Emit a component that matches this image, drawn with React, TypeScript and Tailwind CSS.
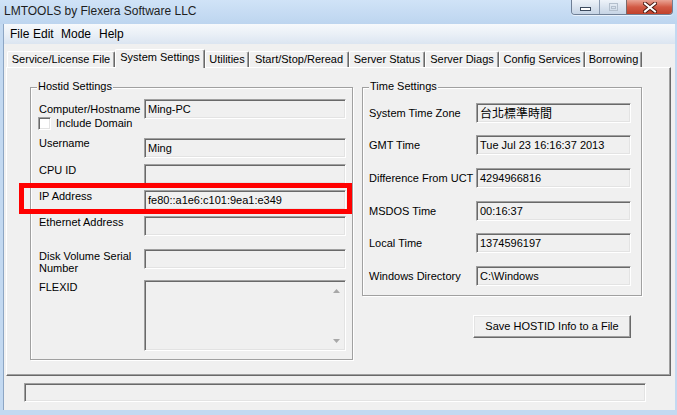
import React from "react"

const sunken =
  "border border-[#a0a0a0] border-r-white border-b-white bg-[#f0f0f0] shadow-[inset_1px_1px_0_#696969,inset_-1px_-1px_0_#e3e3e3]"

const tabs = [
  { label: "Service/License File", w: "w-[108px]" },
  { label: "System Settings", w: "w-[90px]", active: true },
  { label: "Utilities", w: "w-[44px]" },
  { label: "Start/Stop/Reread", w: "w-[100px]" },
  { label: "Server Status", w: "w-[76px]" },
  { label: "Server Diags", w: "w-[74px]" },
  { label: "Config Services", w: "w-[86px]" },
  { label: "Borrowing", w: "w-[57px]" },
]

const timeRows = [
  { label: "System Time Zone", value: "台北標準時間", mt: "mt-[15px]", cjk: true },
  { label: "GMT Time", value: "Tue Jul 23 16:16:37 2013", mt: "mt-[12px]" },
  { label: "Difference From UCT", value: "4294966816", mt: "mt-[13px]" },
  { label: "MSDOS Time", value: "00:16:37", mt: "mt-[13px]" },
  { label: "Local Time", value: "1374596197", mt: "mt-[12px]" },
  { label: "Windows Directory", value: "C:\\Windows", mt: "mt-[13px]" },
]

function TextBox({ className, children }: { className: string; children?: React.ReactNode }) {
  return (
    <div className={`${sunken} ${className} flex items-center pl-[3px] leading-[13px] whitespace-nowrap overflow-hidden`}>
      {children}
    </div>
  )
}

function GroupBox({ title, className, children }: { title: string; className: string; children: React.ReactNode }) {
  return (
    <div className={`relative border border-[#a0a0a0] shadow-[1px_1px_0_#fff,inset_1px_1px_0_#fff] ${className}`}>
      <span className="absolute left-[6px] top-[-8px] px-[1px] bg-[#f0f0f0] leading-[13px]">{title}</span>
      {children}
    </div>
  )
}

function HostRow({ label, value, mt, lmt = "" }: { label: string; value?: string; mt: string; lmt?: string }) {
  return (
    <div className={`flex items-start ${mt}`}>
      <span className={`w-[105px] leading-[13px] ${lmt}`}>{label}</span>
      <TextBox className="w-[202px] h-[20px]">{value}</TextBox>
    </div>
  )
}

function WindowButtons() {
  return (
    <div className="flex h-[15px] mr-[4px] rounded-b-[4px] overflow-hidden border border-t-0 border-[#6f7f95] shadow-[0_1px_0_#e8f1fb]">
      <div className="w-[28px] flex items-center justify-center bg-gradient-to-b from-[#eef3f9] to-[#c6d4e5] border-r border-[#8a9ab0]">
        <span className="w-[11px] h-[4px] bg-white border border-[#3c4a5e] mt-[3px]" />
      </div>
      <div className="w-[27px] flex items-center justify-center bg-gradient-to-b from-[#eef3f9] to-[#c6d4e5] border-r border-[#7a6a6a]">
        <span className="w-[9px] h-[8px] border border-[#b3bfcd] flex items-center justify-center">
          <span className="w-[5px] h-[3px] border border-[#b3bfcd]" />
        </span>
      </div>
      <div className="w-[45px] flex items-center justify-center bg-gradient-to-b from-[#e9a394] via-[#d25a45] to-[#c1412a]">
        <svg width="14" height="11" viewBox="0 0 14 11">
          <path d="M2 1.5 L12 9.5 M12 1.5 L2 9.5" stroke="#4a1a12" strokeWidth="4" strokeLinecap="square" />
          <path d="M2 1.5 L12 9.5 M12 1.5 L2 9.5" stroke="#ffffff" strokeWidth="2" strokeLinecap="square" />
        </svg>
      </div>
    </div>
  )
}

export default function App() {
  return (
    <div className="relative w-[677px] h-[415px] overflow-hidden bg-[#c3d9f1] font-['Liberation_Sans',Arial,sans-serif] text-[11px] text-black">
      <div className="h-[24px] flex items-start justify-between bg-gradient-to-b from-[#d0e3f7] to-[#bdd5ef]">
        <span className="pl-[4px] pt-[4px] text-[12px] leading-[15px] text-[#1e1e1e]">LMTOOLS by Flexera Software LLC</span>
        <WindowButtons />
      </div>

      <div className="ml-[3px] mr-[2px] h-[386px] bg-[#f0f0f0] flex flex-col border-l border-[#8da6c4]">
        <div className="h-[20px] flex items-center pl-[6px] text-[12px] bg-gradient-to-b from-[#f7f9fc] via-[#eaf0f7] to-[#dbe5f1]">
          <span className="w-[23px]">File</span>
          <span className="w-[28px]">Edit</span>
          <span className="w-[38px]">Mode</span>
          <span>Help</span>
        </div>

        <div className="h-[23px] flex items-end pl-[3px]">
          {tabs.map((t) =>
            t.active ? (
              <div
                key={t.label}
                className={`${t.w} relative z-10 h-[19px] mb-[-1px] flex items-start justify-center pt-[1px] leading-[13px] bg-[#f0f0f0] border-l border-t border-white border-r border-r-[#696969] rounded-t-[2px] shadow-[inset_-1px_0_0_#a0a0a0]`}
              >
                {t.label}
              </div>
            ) : (
              <div
                key={t.label}
                className={`${t.w} h-[16px] flex items-start justify-center pt-[1px] leading-[13px] bg-[#f0f0f0] border-l border-t border-white border-r border-r-[#696969] rounded-t-[2px] shadow-[inset_-1px_0_0_#a0a0a0]`}
              >
                {t.label}
              </div>
            )
          )}
        </div>

        <div className="ml-[2px] w-[665px] h-[309px] border border-white border-r-[#696969] border-b-[#696969] shadow-[inset_-1px_-1px_0_#a0a0a0] flex items-start pl-[23px] pt-[19px] gap-[9px]">
          <GroupBox title="Hostid Settings" className="w-[323px] h-[273px]">
            <div className="flex flex-col pl-[8px]">
              <div className="mt-[11px] flex items-center">
                <span className="w-[105px] leading-[13px]">Computer/Hostname</span>
                <TextBox className="w-[202px] h-[20px]">Ming-PC</TextBox>
              </div>
              <div className="mt-[-2px] ml-[-1px] h-[13px] flex items-center">
                <span className="w-[13px] h-[13px] bg-white border border-[#a0a0a0] border-r-white border-b-white shadow-[inset_1px_1px_0_#696969,inset_-1px_-1px_0_#e3e3e3]" />
                <span className="ml-[5px] leading-[13px]">Include Domain</span>
              </div>
              <HostRow label="Username" value="Ming" mt="mt-[8px]" lmt="mt-[-1px]" />
              <HostRow label="CPU ID" mt="mt-[6px]" />
              <HostRow label="IP Address" value="fe80::a1e6:c101:9ea1:e349" mt="mt-[6px]" />
              <HostRow label="Ethernet Address" mt="mt-[6px]" />
              <div className="flex items-start mt-[13px] h-[20px]">
                <span className="w-[105px] leading-[12px] pt-[1px]">
                  Disk Volume Serial
                  <br />
                  Number
                </span>
                <TextBox className="w-[202px] h-[20px]" />
              </div>
              <div className="flex items-start mt-[11px]">
                <span className="w-[105px] leading-[13px] pt-[1px]">FLEXID</span>
                <div className={`${sunken} w-[202px] h-[71px] flex justify-end`}>
                  <div className="w-[15px] mr-[1px] flex flex-col items-center justify-between pt-[8px] pb-[7px]">
                    <svg width="7" height="4" viewBox="0 0 7 4">
                      <path d="M0 4 L3.5 0 L7 4 Z" fill="#a8a8a8" />
                    </svg>
                    <svg width="7" height="4" viewBox="0 0 7 4">
                      <path d="M0 0 L3.5 4 L7 0 Z" fill="#a8a8a8" />
                    </svg>
                  </div>
                </div>
              </div>
            </div>
          </GroupBox>

          <div className="flex flex-col">
            <GroupBox title="Time Settings" className="w-[280px] h-[209px]">
              <div className="flex flex-col pl-[6px]">
                {timeRows.map((r) => (
                  <div key={r.label} className={`flex items-center ${r.mt}`}>
                    <span className="w-[107px] leading-[13px]">{r.label}</span>
                    <TextBox className="w-[155px] h-[20px]">
                      {r.cjk ? (
                        <span className="font-['Noto_Sans_CJK_TC','Liberation_Sans',sans-serif] text-[12px] leading-[14px]">{r.value}</span>
                      ) : (
                        r.value
                      )}
                    </TextBox>
                  </div>
                ))}
              </div>
            </GroupBox>
            <button className="mt-[19px] ml-[111px] w-[158px] h-[23px] flex items-center justify-center bg-[#f0f0f0] border border-white border-r-[#696969] border-b-[#696969] shadow-[inset_-1px_-1px_0_#a0a0a0,inset_1px_1px_0_#e3e3e3] text-[11px] leading-[13px]">
              Save HOSTID Info to a File
            </button>
          </div>
        </div>

        <div className={`${sunken} mt-[7px] ml-[20px] w-[622px] h-[19px]`} />
      </div>

      <div className="absolute left-[19px] top-[183px] w-[333px] h-[31px] border-[5px] border-[#ff0000]" />
    </div>
  )
}
